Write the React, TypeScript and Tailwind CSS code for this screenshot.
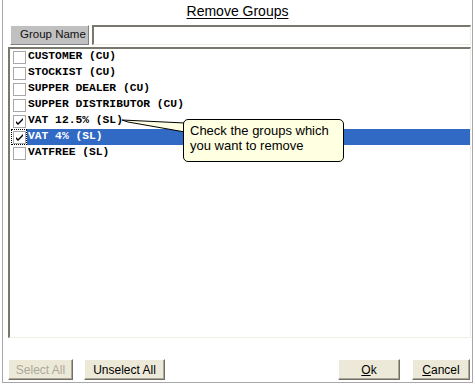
import React from "react";

const groups = [
  { name: "CUSTOMER (CU)", checked: false },
  { name: "STOCKIST (CU)", checked: false },
  { name: "SUPPER DEALER (CU)", checked: false },
  { name: "SUPPER DISTRIBUTOR (CU)", checked: false },
  { name: "VAT 12.5% (SL)", checked: true },
  { name: "VAT 4% (SL)", checked: true, selected: true },
  { name: "VATFREE (SL)", checked: false },
];

function Check() {
  return (
    <svg width="9" height="9" viewBox="0 0 9 9">
      <path d="M1 4 L3 6 L8 1 L8 3 L3 8 L1 6 Z" fill="#000" />
    </svg>
  );
}

function WinButton({ children, disabled, className = "" }: { children: React.ReactNode; disabled?: boolean; className?: string }) {
  return (
    <button
      className={`h-[21px] bg-[#ece9d8] border-t border-l border-white border-b border-r border-b-[#716f64] border-r-[#716f64] shadow-[inset_-1px_-1px_#aca899] text-[12px] leading-none ${disabled ? "text-[#aca899]" : "text-black"} ${className}`}
    >
      {children}
    </button>
  );
}

export default function App() {
  return (
    <div className="relative w-[475px] h-[385px] bg-white font-['Liberation_Sans',Arial,sans-serif]">
      <div className="ml-[2px] w-[471px] h-[383px] border-l border-r border-b border-[#a7a6aa] flex flex-col">
        {/* Title */}
        <div className="h-[25px] flex justify-center pt-[2px]">
          <span className="text-[14px] leading-[18px] underline underline-offset-[2px] text-black">Remove Groups</span>
        </div>

        {/* Header row */}
        <div className="flex h-[20px] gap-[3px] ml-[7px]">
          <div className="w-[79px] h-[20px] bg-[#c0c0c0] border border-t-white border-l-white border-b-[#808080] border-r-[#808080] flex items-center pl-[9px] whitespace-nowrap text-[11.5px] text-[#111]">
            Group Name
          </div>
          <div className="w-[379px] h-[20px] border-t-2 border-l-2 border-t-[#7a786c] border-l-[#7a786c] border-b border-r border-b-[#f1efe2] border-r-[#f1efe2] bg-white" />
        </div>

        {/* List */}
        <div className="ml-[5px] mt-[2px] w-[463px] h-[291px] border-t-2 border-l-2 border-t-[#7a786c] border-l-[#7a786c] border-b border-r border-b-[#f1efe2] border-r-[#f1efe2] bg-white">
          {groups.map((g) => (
            <div key={g.name} className="flex items-center h-[16px]">
              <div className={`ml-[1px] w-[16px] h-[16px] flex items-center justify-center ${g.selected ? "outline-1 outline-dotted outline-black -outline-offset-1" : ""}`}>
                <div className="w-[13px] h-[13px] border border-[#a8a8a8] bg-white flex items-center justify-center">
                  {g.checked && <Check />}
                </div>
              </div>
              <div className={`flex-1 h-[16px] flex items-center pl-[1px] ${g.selected ? "bg-[#316ac5] text-white" : "text-black"}`}>
                <span className="font-['Liberation_Mono','Courier_New',monospace] font-bold text-[11.3px] whitespace-pre leading-none">{g.name}</span>
              </div>
            </div>
          ))}
        </div>

        {/* Buttons */}
        <div className="flex mt-[21px] ml-[5px] mr-[2px]">
          <WinButton disabled className="w-[65px]">Select All</WinButton>
          <WinButton className="w-[81px] ml-[11px]">Unselect All</WinButton>
          <div className="flex-1" />
          <WinButton className="w-[62px]"><span className="underline">O</span>k</WinButton>
          <WinButton className="w-[58px] ml-[12px]"><span className="underline">C</span>ancel</WinButton>
        </div>
      </div>

      {/* Balloon tip */}
      <svg className="absolute left-0 top-0 pointer-events-none" width="475" height="385">
        <polygon points="122,120 185,123 185,132 128,122" fill="#ffffe1" stroke="#000" strokeWidth="1" />
      </svg>
      <div className="absolute left-[183px] top-[119px] w-[161px] h-[43px] bg-[#ffffe1] border border-black rounded-[5px] px-[6px] pt-[3px] text-[13px] leading-[15px] text-black">
        Check the groups which
        <br />
        you want to remove
      </div>
    </div>
  );
}
